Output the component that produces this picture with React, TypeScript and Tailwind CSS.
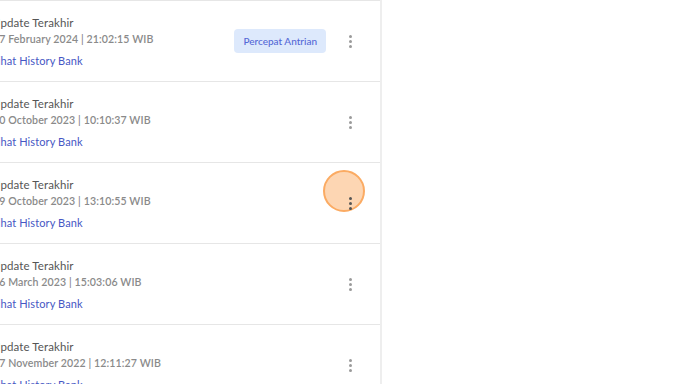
const rows = [
	{ date: "17 February 2024 | 21:02:15 WIB", speedUp: true },
	{ date: "20 October 2023 | 10:10:37 WIB", speedUp: false },
	{ date: "19 October 2023 | 13:10:55 WIB", speedUp: false, pressed: true },
	{ date: "16 March 2023 | 15:03:06 WIB", speedUp: false },
	{ date: "17 November 2022 | 12:11:27 WIB", speedUp: false },
]

function Kebab(props: { dark?: boolean }) {
	const color = props.dark ? "bg-[#555]" : "bg-[#9a9a9a]"
	return (
		<div className="w-6 h-6 flex flex-col items-center justify-center gap-[2px]">
			<span className={`w-[3px] h-[3px] rounded-full ${color}`} />
			<span className={`w-[3px] h-[3px] rounded-full ${color}`} />
			<span className={`w-[3px] h-[3px] rounded-full ${color}`} />
		</div>
	)
}

export default function App() {
	return (
		<div className="w-[688px] h-[384px] overflow-hidden bg-white font-['Lato',sans-serif]">
			<div className="w-[382px] h-full border-r-2 border-[#eeeeee] overflow-hidden">
				<div className="-ml-[8px] border-t border-[#e6e6e6]">
					{rows.map((row, i) => (
						<div key={i} className="relative h-[81px] border-b border-[#e6e6e6] flex items-center pl-0 pr-[18px]">
							<div className="flex-1 pt-[1px]">
								<p className="text-[11.5px] leading-4 tracking-[0.1px] text-[#555]">Update Terakhir</p>
								<p className="pl-[1px] text-[10.6px] leading-4 tracking-[0.1px] font-semibold text-[#8a8a8a]">{row.date}</p>
								<p className="mt-[6px] text-[11px] leading-4 tracking-[0.1px] text-[#4657c4]">Lihat History Bank</p>
							</div>
							{row.speedUp && (
								<button className="h-6 px-[9px] rounded-[4px] bg-[#dde9fc] text-[10px] font-medium text-[#5468d6]">
									Percepat Antrian
								</button>
							)}
							<div className="ml-3 relative">
								{row.pressed && (
									<span className="absolute left-[-15px] top-[-21px] w-[42px] h-[42px] rounded-full bg-[#fdd6b3] border-2 border-[#fbab63]" />
								)}
								<div className="relative">
									<Kebab dark={row.pressed} />
								</div>
							</div>
						</div>
					))}
				</div>
			</div>
		</div>
	)
}
